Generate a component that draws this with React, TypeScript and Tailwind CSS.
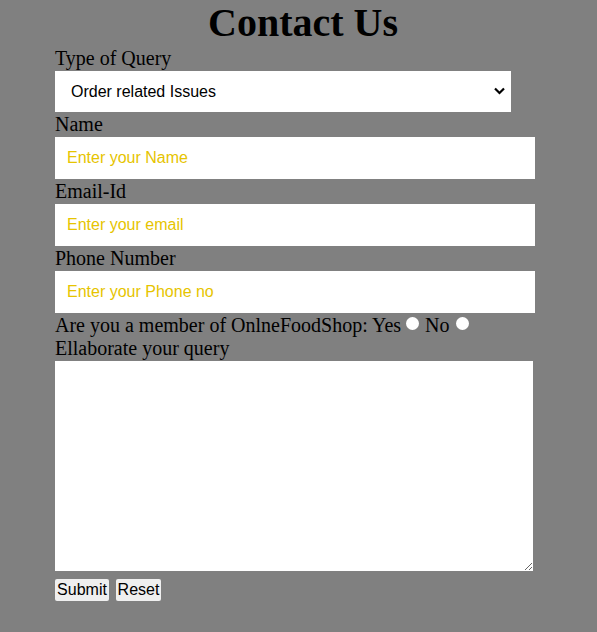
import React from "react";

export default function App() {
  const serif = { fontFamily: '"Liberation Serif", "Times New Roman", serif' };
  return (
    <div className="min-h-[632px] w-full bg-[#808080] text-black" style={serif}>
      <div className="ml-[55px] w-[496px]">
        <h1 className="m-0 h-[47px] text-center text-[40px] font-bold leading-[46px]">Contact Us</h1>
        <form className="font-['Liberation_Serif',serif] text-[20px]" onSubmit={(e) => e.preventDefault()}>
          <label className="block leading-[23px]">Type of Query</label>
          <div className="relative mt-px h-[41px] w-[456px]">
            <select
              className="h-[41px] w-[456px] appearance-none bg-white pl-[16px] font-['Liberation_Sans',Arial,sans-serif] text-[16px] text-black outline-none"
              defaultValue="order"
            >
              <option value="order">Order related Issues</option>
              <option value="payment">Payment related Issues</option>
              <option value="other">Other</option>
            </select>
            <svg
              className="pointer-events-none absolute left-[439px] top-[16px]"
              width="11"
              height="8"
              viewBox="0 0 11 8"
            >
              <path d="M1 1.5 L5.5 6 L10 1.5" fill="none" stroke="#000" strokeWidth="2.2" />
            </svg>
          </div>
          <label className="mt-px block leading-[23px]">Name</label>
          <input
            className="mt-px block h-[42px] w-[480px] bg-white pl-[12px] font-['Liberation_Sans',Arial,sans-serif] text-[16px] text-black outline-none placeholder:text-[#e6c400]"
            placeholder="Enter your Name"
          />
          <label className="mt-px block leading-[23px]">Email-Id</label>
          <input
            className="mt-px block h-[42px] w-[480px] bg-white pl-[12px] font-['Liberation_Sans',Arial,sans-serif] text-[16px] text-black outline-none placeholder:text-[#e6c400]"
            placeholder="Enter your email"
          />
          <label className="mt-px block leading-[23px]">Phone Number</label>
          <input
            className="mt-px block h-[42px] w-[480px] bg-white pl-[12px] font-['Liberation_Sans',Arial,sans-serif] text-[16px] text-black outline-none placeholder:text-[#e6c400]"
            placeholder="Enter your Phone no"
          />
          <div className="mt-px flex h-[23px] items-start leading-[23px]">
            <span>Are you a member of OnlneFoodShop: Yes</span>
            <input
              type="radio"
              name="member"
              className="ml-[5px] mr-[6px] mt-[3px] h-[13px] w-[13px] appearance-none rounded-full bg-white"
            />
            <span>No</span>
            <input
              type="radio"
              name="member"
              className="ml-[6px] mt-[3px] h-[13px] w-[13px] appearance-none rounded-full bg-white"
            />
          </div>
          <label className="block leading-[23px]">Ellaborate your query</label>
          <textarea className="mt-px block h-[210px] w-[478px] bg-white outline-none" />
          <div className="mt-[8px] flex gap-[7px] font-['Liberation_Sans',Arial,sans-serif] text-[16px]">
            <button type="submit" className="h-[22px] w-[54px] rounded-[2px] bg-[#efefef] p-0 text-center leading-[22px] text-black">
              Submit
            </button>
            <button type="reset" className="h-[22px] w-[45px] rounded-[2px] bg-[#efefef] p-0 text-center leading-[22px] text-black">
              Reset
            </button>
          </div>
        </form>
      </div>
    </div>
  );
}
